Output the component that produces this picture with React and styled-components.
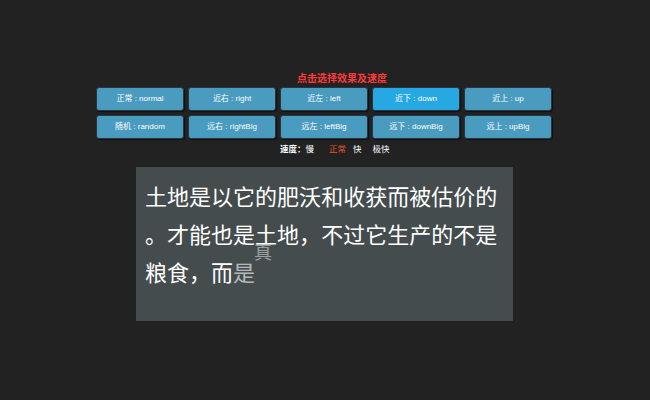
import React from "react";
import styled, { createGlobalStyle, css } from "styled-components";

const Global = createGlobalStyle`
  html, body { margin: 0; padding: 0; background: #222222; }
  body { font-family: "Noto Sans CJK SC", "Liberation Sans", sans-serif; }
`;

const Page = styled.div`
  width: 648px;
  height: 400px;
  display: flex;
  flex-direction: column;
  align-items: center;
  box-sizing: border-box;
  padding-top: 72px;
`;

const Title = styled.div`
  width: 456px;
  box-sizing: border-box;
  padding-left: 36px;
  text-align: center;
  color: #ff3a3a;
  font-weight: bold;
  font-size: 10px;
  line-height: 12px;
  height: 12px;
`;

const Grid = styled.div`
  margin-top: 3px;
  display: grid;
  grid-template-columns: repeat(5, 88px);
  grid-auto-rows: 24px;
  gap: 4px;
`;

const Btn = styled.button`
  box-sizing: border-box;
  margin: 0;
  padding: 0;
  border: 1px solid #263540;
  border-radius: 3px;
  box-shadow: 1px 1px 1px rgba(0, 0, 0, 0.55);
  background: ${(p) => (p.$active ? "#26a9e2" : "#4a9bc0")};
  color: #ffffff;
  font-family: "Liberation Sans", "Noto Sans CJK SC", sans-serif;
  font-size: 8px;
  line-height: 22px;
  text-align: center;
  cursor: pointer;
`;

const Speed = styled.div`
  margin-top: 3px;
  width: 456px;
  box-sizing: border-box;
  padding-left: 184px;
  display: flex;
  font-size: 8.5px;
  line-height: 12px;
  height: 12px;
  color: #ffffff;
`;

const SpeedLabel = styled.span`
  font-weight: bold;
`;

const SpeedItem = styled.span`
  margin-left: ${(p) => p.$gap}px;
  color: ${(p) => (p.$active ? "#e3552b" : "#ffffff")};
`;

const Board = styled.div`
  margin-top: 13px;
  margin-left: 1px;
  width: 377px;
  height: 154px;
  box-sizing: border-box;
  padding: 9px 9px;
  background: #444c4d;
  color: #ffffff;
  font-size: 22px;
  line-height: 38px;
  overflow: hidden;
`;

const Char = styled.span`
  display: inline-block;
  ${(p) =>
    p.$state === "entering" &&
    css`
      opacity: 0.6;
    `}
  ${(p) =>
    p.$state === "rising" &&
    css`
      opacity: 0.45;
      transform: translate(-3px, -20px) scale(0.82);
    `}
`;

const buttons = [
  ["正常 : normal", false],
  ["近右 : right", false],
  ["近左 : left", false],
  ["近下 : down", true],
  ["近上 : up", false],
  ["随机 : random", false],
  ["远右 : rightBig", false],
  ["远左 : leftBig", false],
  ["远下 : downBig", false],
  ["远上 : upBig", false],
];

const text = "土地是以它的肥沃和收获而被估价的。才能也是土地，不过它生产的不是粮食，而";

export default function App() {
  return (
    <>
      <Global />
      <Page>
        <Title>点击选择效果及速度</Title>
        <Grid>
          {buttons.map(([label, active]) => (
            <Btn key={label} $active={active}>
              {label}
            </Btn>
          ))}
        </Grid>
        <Speed>
          <SpeedLabel>速度：</SpeedLabel>
          <SpeedItem $gap={0}>慢</SpeedItem>
          <SpeedItem $gap={15} $active>
            正常
          </SpeedItem>
          <SpeedItem $gap={7}>快</SpeedItem>
          <SpeedItem $gap={11}>极快</SpeedItem>
        </Speed>
        <Board>
          {Array.from(text).map((c, i) => (
            <Char key={i}>{c}</Char>
          ))}
          <Char $state="entering">是</Char>
          <Char $state="rising">真</Char>
        </Board>
      </Page>
    </>
  );
}
